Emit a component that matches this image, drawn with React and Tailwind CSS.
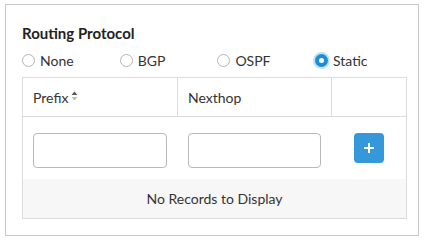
import React, { useState } from 'react';

const options = ['None', 'BGP', 'OSPF', 'Static'];

const Radio = ({ label, checked, onClick }) => (
  <button type="button" onClick={onClick} className="flex shrink-0 items-center w-[97.7px] h-5 text-left">
    {checked ? (
      <span className="flex items-center justify-center w-[13px] h-[13px] rounded-full bg-[#1a8fd6] ring-2 ring-[#bfe0f5]">
        <span className="w-[5px] h-[5px] rounded-full bg-white" />
      </span>
    ) : (
      <span className="w-[13px] h-[13px] rounded-full border border-[#b5b5b5] bg-white" />
    )}
    <span className="ml-[5px]">{label}</span>
  </button>
);

const SortIcon = () => (
  <svg width="7" height="10" viewBox="0 0 7 10" className="ml-[3px] mt-[-2px]">
    <path d="M0.5 4 L3.5 0.5 L6.5 4 Z" fill="#555" />
    <path d="M0.5 6 L3.5 9.5 L6.5 6 Z" fill="#bbb" />
  </svg>
);

const App = () => {
  const [protocol, setProtocol] = useState('Static');

  return (
    <div className="w-[427px] h-[240px] bg-white pt-[4px] pl-[5px] text-[14px] text-[#333] font-['Lato','Liberation_Sans',sans-serif]">
      <div className="w-[414px] h-[232px] border border-[#c8c8c8] pt-[18px] pl-4 pr-[11px]">
        {/* Title */}
        <h3 className="font-bold text-[15px] leading-5 text-[#222]">Routing Protocol</h3>

        {/* Protocol radios */}
        <div className="flex mt-[7px]">
          {options.map((o) => (
            <Radio key={o} label={o} checked={protocol === o} onClick={() => setProtocol(o)} />
          ))}
        </div>

        {/* Routes table */}
        <div className="mt-[7px] border border-[#dcdcdc]">
          <div className="flex h-[39px] border-b border-[#dcdcdc]">
            <div className="w-[155px] flex items-center px-[10px] border-r border-[#dcdcdc]">
              <span>Prefix</span>
              <SortIcon />
            </div>
            <div className="w-[154px] flex items-center px-[10px] border-r border-[#dcdcdc]">Nexthop</div>
            <div className="flex-1" />
          </div>
          <div className="flex h-[62px] pt-[16px]">
            <div className="w-[155px] pl-[10px]">
              <input className="w-[134px] h-[35px] border border-[#b8b8b8] rounded-[4px] px-2 outline-none" />
            </div>
            <div className="w-[154px] pl-[10px]">
              <input className="w-[133px] h-[35px] border border-[#b8b8b8] rounded-[4px] px-2 outline-none" />
            </div>
            <div className="flex-1 flex justify-center">
              <button type="button" className="w-[30px] h-[30px] rounded-[4px] bg-[#3498db] flex items-center justify-center">
                <svg width="12" height="12" viewBox="0 0 12 12">
                  <path d="M6 1 V11 M1 6 H11" stroke="white" strokeWidth="2" />
                </svg>
              </button>
            </div>
          </div>
          <div className="h-[39px] bg-[#f7f7f7] flex items-center justify-center">No Records to Display</div>
        </div>
      </div>
    </div>
  );
};

export default App;
